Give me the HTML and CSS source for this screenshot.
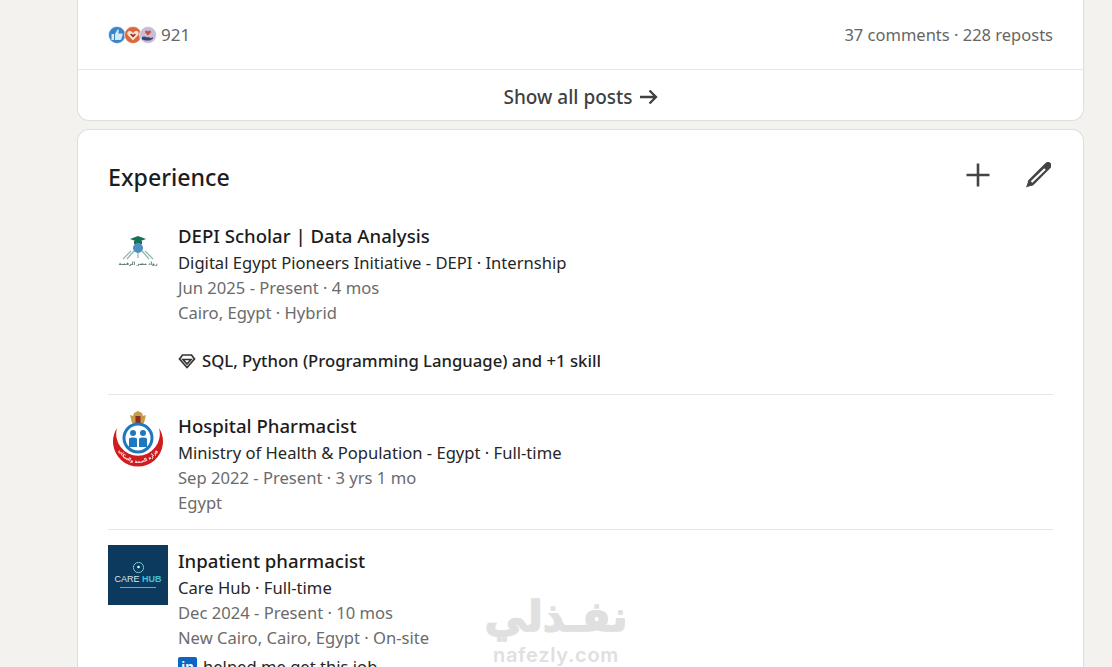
FILE: index.html
```html
<!DOCTYPE html>
<html lang="en">
<head>
<meta charset="utf-8">
<title>Experience</title>
<link rel="stylesheet" href="styles.css">
</head>
<body>
<main class="column">
  <section class="card card-top">
    <div class="social">
      <div class="reactions">
        <span class="stack">
          <svg class="reaction" viewBox="0 0 18 18"><circle cx="9" cy="9" r="8.500" fill="#3a85c8" stroke="#fff" stroke-width=".6"/><path d="M3.500 8h2.500v6H3.500zM7 8l2.400-4.200c.8-.5 1.600.1 1.400 1L10.300 7.500H14c.8 0 1 .8.7 1.300l-1.500 4.500c-.2.500-.5.700-1 .7H7z" fill="#d6e9fb"/></svg>
          <svg class="reaction overlap" viewBox="0 0 18 18"><circle cx="9" cy="9" r="8.500" fill="#d9683f" stroke="#fff" stroke-width=".6"/><path d="M9 14.500L3.800 9c-1.500-2.200.8-4.800 3.200-3.700L9 7l2-1.700c2.400-1.100 4.700 1.500 3.200 3.700z" fill="#fbe3d6"/><path d="M9 11.500L6.500 9c-.5-1 .5-1.500 1.200-1.200L9 9l1.300-1.200c.8-.3 1.700.3 1.200 1.200z" fill="#8a3a20"/></svg>
          <svg class="reaction overlap" viewBox="0 0 18 18"><circle cx="9" cy="9" r="8.500" fill="#c9bcd6" stroke="#fff" stroke-width=".6"/><path d="M9 9.500L6.300 6.800c-.9-1.400.9-2.800 2-1.900l.7.700.7-.7c1.100-.9 2.900.5 2 1.900z" fill="#c8503c"/><path d="M3 11c2-1 3-.5 4.500.2l3 .1c.8.100.8 1.200 0 1.200l2.500-1c1-.3 1.600.6.800 1.200L11 14.500H6.500L3 13.500z" fill="#38437a"/></svg>
        </span>
        <span class="count">921</span>
      </div>
      <div class="stats">37 comments · 228 reposts</div>
    </div>
    <div class="show-all">
      <span>Show all posts</span>
      <svg class="arrow" viewBox="0 0 18 18"><path d="M0 9h15.500M9.500 2.500L16 9l-6.500 6.500" fill="none" stroke="currentColor" stroke-width="2.300"/></svg>
    </div>
  </section>

  <section class="card card-exp">
    <header class="exp-head">
      <h2 class="exp-title">Experience</h2>
      <div class="exp-actions">
        <svg class="act" viewBox="0 0 26 26"><path d="M13 1.500v23M1.500 13h23" fill="none" stroke="#444" stroke-width="2.600"/></svg>
        <svg class="act act-pencil" viewBox="0 0 26 26">
          <path d="M23 3.500L6.500 20" fill="none" stroke="#444" stroke-width="7" stroke-linecap="round"/>
          <path d="M3.500 18.500L1 25.500l7-2.500z" fill="#444"/>
          <path d="M20 7L6.500 20" fill="none" stroke="#fff" stroke-width="2.200"/>
        </svg>
      </div>
    </header>

    <article class="job job-first">
      <div class="logo">
        <svg class="logo-svg soft" viewBox="0 0 60 60">
          <path d="M22 19l8-3 8 3-8 3z" fill="#16705a"/>
          <path d="M26 21h8v3h-8z" fill="#16705a"/>
          <circle cx="30" cy="28" r="5" fill="#4a8fc0"/>
          <path d="M30 33v5M26 31l-7 8M34 31l7 8M23 31l-8 8M37 31l8 8" stroke="#8ab8a4" stroke-width="1.200" fill="none"/>
          <text class="depi-ar" x="30" y="45" text-anchor="middle" lang="ar" direction="rtl">رواد مصر الرقمية</text>
        </svg>
      </div>
      <div class="job-body">
        <h3 class="job-title">DEPI Scholar | Data Analysis</h3>
        <p class="job-org">Digital Egypt Pioneers Initiative - DEPI · Internship</p>
        <p class="job-meta">Jun 2025 - Present · 4 mos</p>
        <p class="job-meta">Cairo, Egypt · Hybrid</p>
        <p class="skills">
          <svg class="gem" viewBox="0 0 18 18"><path d="M4.500 3h9L16.500 7 9 15.500 1.500 7zM5 7.500h8L9 12z" fill="none" stroke="#333" stroke-width="1.700"/></svg>
          <span>SQL, Python (Programming Language) and +1 skill</span>
        </p>
      </div>
    </article>

    <article class="job job-second">
      <div class="logo">
        <svg class="logo-svg soft" viewBox="0 0 60 60">
          <path d="M26 3l4-2 4 2 1 3 3-1-2 8-6 3-6-3-2-8 3 1z" fill="#c89b4a"/>
          <path d="M27.500 6h5v7h-5z" fill="#8c2b24"/>
          <path d="M9 18A25 25 0 1 0 51 18A21.800 21.800 0 1 1 9 18z" fill="#d01c1f"/>
          <circle cx="30" cy="28" r="14" fill="#fff" stroke="#1f78bd" stroke-width="3"/>
          <circle cx="25" cy="23" r="3" fill="#1f78bd"/><circle cx="35" cy="23" r="3" fill="#1f78bd"/>
          <path d="M21 37v-8c0-2 8-2 8 0v8zM31 37v-8c0-2 8-2 8 0v8z" fill="#1f78bd"/>
          <defs><path id="crescent-arc" d="M9 36a21.500 21.500 0 0 0 42 0"/></defs>
          <text class="moh-ar" lang="ar" direction="rtl"><textPath href="#crescent-arc" startOffset="50%" text-anchor="middle">وزارة الصحة والسكان</textPath></text>
        </svg>
      </div>
      <div class="job-body">
        <h3 class="job-title">Hospital Pharmacist</h3>
        <p class="job-org">Ministry of Health &amp; Population - Egypt · Full-time</p>
        <p class="job-meta">Sep 2022 - Present · 3 yrs 1 mo</p>
        <p class="job-meta">Egypt</p>
      </div>
    </article>

    <article class="job job-third">
      <div class="logo logo-care">
        <svg class="care-pin" viewBox="0 0 14 14"><circle cx="7" cy="7" r="5.500" fill="none" stroke="#7fd0e2" stroke-width="1"/><circle cx="7" cy="6.500" r="1.400" fill="#e6f6fa"/></svg>
        <span class="care-name">CARE <b>HUB</b></span>
        <span class="care-line"></span>
      </div>
      <div class="job-body">
        <h3 class="job-title">Inpatient pharmacist</h3>
        <p class="job-org">Care Hub · Full-time</p>
        <p class="job-meta">Dec 2024 - Present · 10 mos</p>
        <p class="job-meta">New Cairo, Cairo, Egypt · On-site</p>
        <p class="helped"><span class="in-badge">in</span><span>helped me get this job</span></p>
      </div>
    </article>
  </section>
</main>
<div class="watermark">
  <div class="wm-ar" lang="ar" dir="rtl">نفـذلي</div>
  <div class="wm-en">nafezly.com</div>
</div>
</body>
</html>
```
FILE: styles.css
```css
* { box-sizing: border-box; }
html, body { margin: 0; height: 667px; overflow: hidden; }
body {
  background: #f4f2ee;
  font-family: "Noto Sans", "Open Sans", "Liberation Sans", sans-serif;
  color: #1f1f1f;
  position: relative;
}
p, h2, h3 { margin: 0; font-weight: 400; }
.column { width: 1007px; margin-left: 77px; display: flex; flex-direction: column; gap: 8px; }
.card { background: #fff; border: 1px solid #dfdeda; }
.card-top { height: 121px; border-top: 0; border-radius: 0 0 12px 12px; display: flex; flex-direction: column; }
.social { height: 69px; flex: none; padding: 0 30px; display: flex; justify-content: space-between; align-items: center; border-bottom: 1px solid #e6e6e6; box-sizing: content-box; color: #666; font-size: 16.500px; }
.reactions { display: flex; align-items: center; gap: 4px; }
.stack { display: flex; }
.reaction { width: 18px; height: 18px; display: block; }
.overlap { margin-left: -2.500px; }
.count { font-size: 17px; }
.show-all { flex: 1; display: flex; align-items: center; justify-content: center; gap: 7px; font-size: 19px; font-weight: 500; color: #404040; padding-top: 3px; }
.arrow { width: 18px; height: 18px; }
.card-exp { height: 560px; border-radius: 12px 12px 0 0; border-bottom: 0; padding: 0 30px; }
.exp-head { height: 84px; display: flex; justify-content: space-between; align-items: center; padding-top: 9px; }
.exp-title { font-size: 23.200px; font-weight: 500; color: #1c1c1c; }
.exp-actions { display: flex; gap: 34px; margin-top: -3px; margin-right: 2px; }
.act { width: 26px; height: 26px; display: block; }
.job { display: flex; gap: 10px; border-bottom: 1px solid #e6e6e6; }
.job-first { height: 181px; padding-top: 6px; }
.job-second { height: 135px; padding-top: 15px; }
.job-third { border-bottom: 0; padding-top: 15px; }
.job-body { padding-top: 2px; }
.logo { width: 60px; height: 60px; flex: none; }
.logo-svg { width: 60px; height: 60px; display: block; overflow: visible; }
.soft { filter: blur(.35px); }
.depi-ar { font-family: "DejaVu Sans", sans-serif; font-size: 4.500px; font-weight: 700; fill: #3f6b5a; }
.moh-ar { font-family: "DejaVu Sans", sans-serif; font-size: 4.500px; font-weight: 700; fill: #fff; }
.job-title { font-size: 18.600px; font-weight: 500; line-height: 27px; margin-bottom: 1px; color: #1c1c1c; }
.job-org { font-size: 16.600px; line-height: 25px; color: #262626; }
.job-meta { font-size: 16.600px; line-height: 25px; color: #6b6b6b; }
.skills { display: flex; align-items: center; gap: 6px; margin-top: 23px; font-size: 16.700px; line-height: 25px; font-weight: 500; color: #222; }
.gem { width: 18px; height: 18px; flex: none; }
.helped { display: flex; align-items: center; gap: 6px; margin-top: 4px; font-size: 16.600px; line-height: 25px; color: #262626; }
.in-badge { width: 19px; height: 19px; border-radius: 2px; background: #0a66c2; color: #fff; font-size: 13px; font-weight: 700; line-height: 19px; text-align: center; }
.logo-care { background: #0b3a5e; display: flex; flex-direction: column; align-items: center; padding-top: 16px; font-family: "Liberation Sans", sans-serif; }
.care-pin { width: 13px; height: 13px; flex: none; }
.care-name { font-size: 9px; line-height: 11px; color: #d8e6ee; white-space: nowrap; }
.care-name b { color: #3fc1d9; font-weight: 700; }
.care-line { width: 36px; height: 1px; margin-top: 2px; background: #7f9fb5; }
.watermark { position: absolute; left: 481px; top: 590px; width: 150px; text-align: center; color: #e0e0e0; }
.wm-ar { font-family: "DejaVu Sans", sans-serif; font-weight: 700; font-size: 42px; line-height: 54px; -webkit-text-stroke: 1.500px #e0e0e0; white-space: nowrap; }
.wm-en { font-family: "Inter", sans-serif; font-weight: 600; font-size: 20px; line-height: 22px; letter-spacing: .7px; }
```
